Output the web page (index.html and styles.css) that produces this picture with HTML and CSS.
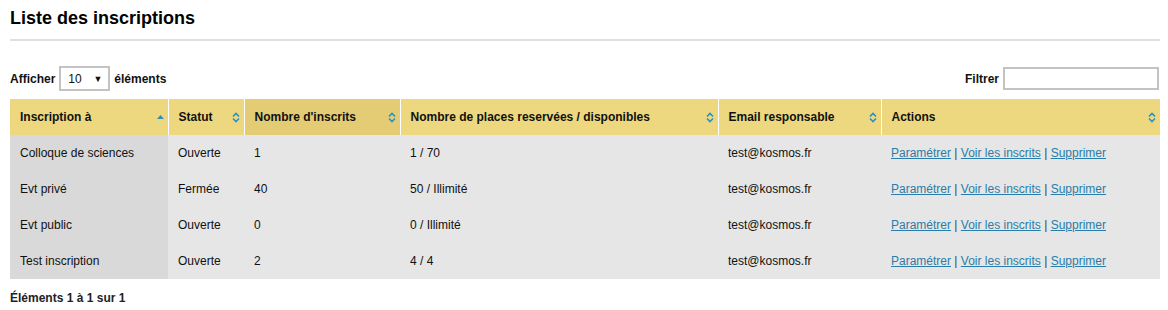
FILE: index.html
```html
<!DOCTYPE html>
<html lang="fr">
<head>
	<meta charset="UTF-8">
	<meta name="viewport" content="width=device-width, initial-scale=1.0">
	<link rel="stylesheet" href="styles.css">
	<title>Liste des inscriptions</title>
</head>
<body>
	<h1 class="title">Liste des inscriptions</h1>
	<div class="controls">
		<label class="length">Afficher
			<span class="select"><span>10</span><span class="caret">&#9660;</span></span>
			éléments</label>
		<label class="filter">Filtrer <input type="text"></label>
	</div>
	<table class="list">
		<colgroup>
			<col style="width: 158px">
			<col style="width: 76px">
			<col style="width: 156px">
			<col style="width: 318px">
			<col style="width: 163px">
			<col>
		</colgroup>
		<thead>
			<tr>
				<th class="asc"><div class="th"><span>Inscription à</span>
					<svg width="7" height="4" viewBox="0 0 7 4"><path d="M0 4 L3.5 0 L7 4 Z" fill="#2b8fc2"/></svg></div></th>
				<th><div class="th"><span>Statut</span>
					<svg width="8" height="11" viewBox="0 0 8 11"><path d="M1 4.5 L4 1.5 L7 4.5 M1 6.5 L4 9.5 L7 6.5" fill="none" stroke="#2b8fc2" stroke-width="1.6"/></svg></div></th>
				<th class="sorted"><div class="th"><span>Nombre d'inscrits</span>
					<svg width="8" height="11" viewBox="0 0 8 11"><path d="M1 4.5 L4 1.5 L7 4.5 M1 6.5 L4 9.5 L7 6.5" fill="none" stroke="#2b8fc2" stroke-width="1.6"/></svg></div></th>
				<th><div class="th"><span>Nombre de places reservées / disponibles</span>
					<svg width="8" height="11" viewBox="0 0 8 11"><path d="M1 4.5 L4 1.5 L7 4.5 M1 6.5 L4 9.5 L7 6.5" fill="none" stroke="#2b8fc2" stroke-width="1.6"/></svg></div></th>
				<th><div class="th"><span>Email responsable</span>
					<svg width="8" height="11" viewBox="0 0 8 11"><path d="M1 4.5 L4 1.5 L7 4.5 M1 6.5 L4 9.5 L7 6.5" fill="none" stroke="#2b8fc2" stroke-width="1.6"/></svg></div></th>
				<th><div class="th"><span>Actions</span>
					<svg width="8" height="11" viewBox="0 0 8 11"><path d="M1 4.5 L4 1.5 L7 4.5 M1 6.5 L4 9.5 L7 6.5" fill="none" stroke="#2b8fc2" stroke-width="1.6"/></svg></div></th>
			</tr>
		</thead>
		<tbody>
			<tr>
				<td>Colloque de sciences</td>
				<td>Ouverte</td>
				<td>1</td>
				<td>1 / 70</td>
				<td>test@kosmos.fr</td>
				<td class="actions"><a href="#">Paramétrer</a> | <a href="#">Voir les inscrits</a> | <a href="#">Supprimer</a></td>
			</tr>
			<tr>
				<td>Evt privé</td>
				<td>Fermée</td>
				<td>40</td>
				<td>50 / Illimité</td>
				<td>test@kosmos.fr</td>
				<td class="actions"><a href="#">Paramétrer</a> | <a href="#">Voir les inscrits</a> | <a href="#">Supprimer</a></td>
			</tr>
			<tr>
				<td>Evt public</td>
				<td>Ouverte</td>
				<td>0</td>
				<td>0 / Illimité</td>
				<td>test@kosmos.fr</td>
				<td class="actions"><a href="#">Paramétrer</a> | <a href="#">Voir les inscrits</a> | <a href="#">Supprimer</a></td>
			</tr>
			<tr>
				<td>Test inscription</td>
				<td>Ouverte</td>
				<td>2</td>
				<td>4 / 4</td>
				<td>test@kosmos.fr</td>
				<td class="actions"><a href="#">Paramétrer</a> | <a href="#">Voir les inscrits</a> | <a href="#">Supprimer</a></td>
			</tr>
		</tbody>
	</table>
	<p class="info">Éléments 1 à 1 sur 1</p>
</body>
</html>
```

FILE: styles.css
```css
*{
	padding: 0;
	margin: 0;
	box-sizing: border-box;
	font-family: "Liberation Sans", Arial, sans-serif;
}
body{
	padding: 0 8px 0 10px;
	font-size: 12px;
	color: #111;
	background: #fff;
}
.title{
	font-size: 18px;
	font-weight: 700;
	color: #000;
	padding: 8px 0 11px;
	border-bottom: 2px solid #e0e0e0;
	line-height: 20px;
}
.controls{
	display: flex;
	align-items: center;
	justify-content: space-between;
	padding: 25px 1px 8px 0;
	font-weight: 700;
}
.length{
	display: flex;
	align-items: center;
	gap: 4px;
}
.select{
	width: 51px;
	height: 25px;
	border: 2px solid #c3c3c3;
	display: flex;
	align-items: center;
	justify-content: space-between;
	padding: 0 6px 0 7px;
	font-weight: 400;
}
.caret{
	font-size: 9px;
}
.filter{
	display: flex;
	align-items: center;
	gap: 4px;
}
.filter input{
	width: 156px;
	height: 23px;
	border: 2px solid #c3c3c3;
	outline: none;
}
.list{
	width: 1150px;
	border-collapse: collapse;
	table-layout: fixed;
}
.list th{
	height: 36px;
	background: #edd87f;
	border-right: 1px solid #fff;
	text-align: left;
	font-weight: 700;
	padding: 0 4px 0 10px;
}
.list th:last-child{
	border-right: none;
}
.list th.sorted{
	background: #e4cc74;
}
.th{
	display: flex;
	align-items: center;
	justify-content: space-between;
}
.list td{
	height: 36px;
	background: #e6e6e6;
	padding: 0 10px;
	white-space: nowrap;
}
.list td:first-child{
	background: #d9d9d9;
}
.actions{
	color: #444;
}
.actions a{
	color: #2a7da9;
}
.info{
	font-weight: 700;
	padding-top: 12px;
	color: #222;
}
```
